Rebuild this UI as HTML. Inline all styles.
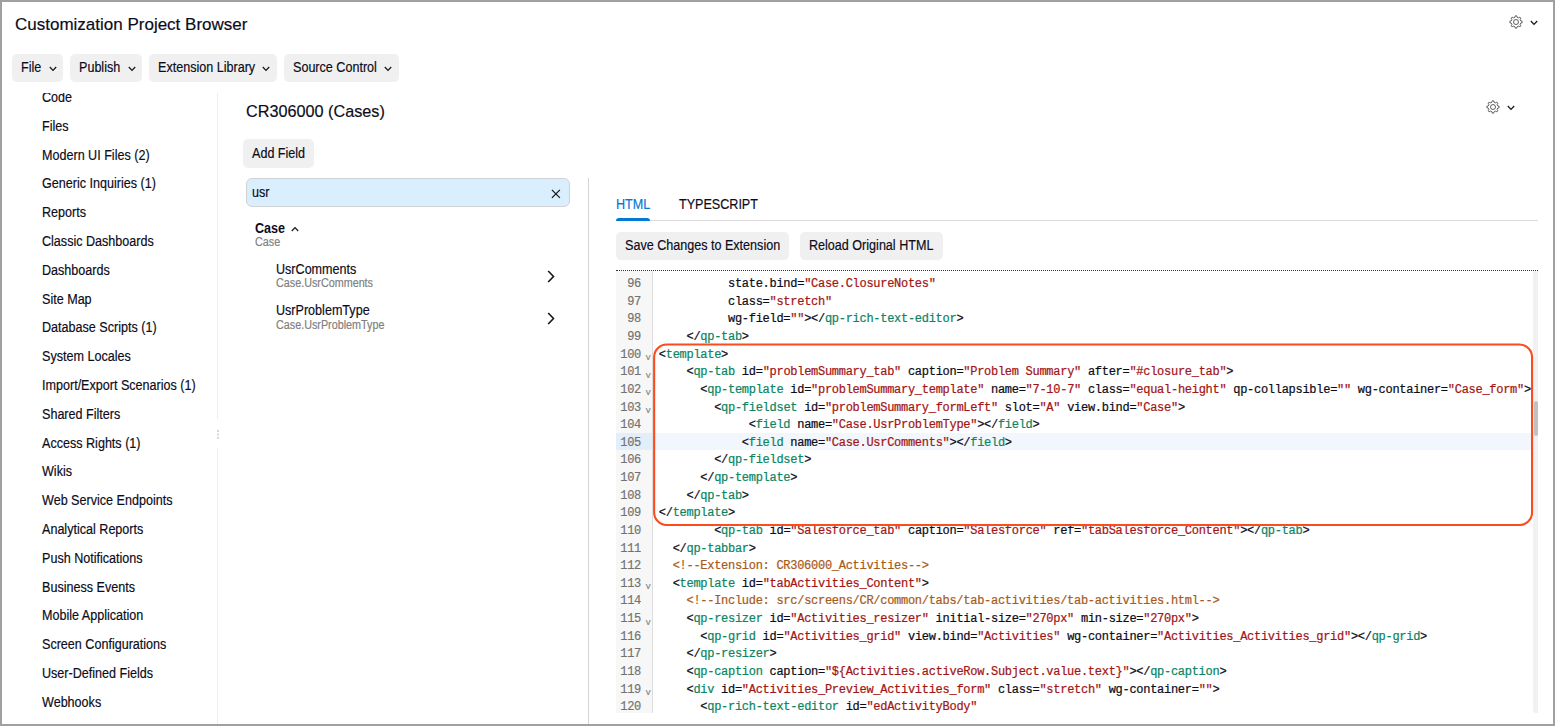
<!DOCTYPE html>
<html lang="en">
<head>
<meta charset="utf-8">
<title>Customization Project Browser</title>
<style>
*{box-sizing:border-box;margin:0;padding:0}
html,body{width:1555px;height:726px;overflow:hidden;background:#fff}
body{font-family:"Liberation Sans",Arial,sans-serif;color:#0c0c1a;-webkit-text-stroke:.18px;position:relative;font-size:14px}
.abs{position:absolute}
.frame{position:absolute;left:0;top:0;width:1555px;height:726px;border:solid #a0a0a0;border-width:2px;z-index:50;pointer-events:none}
.n{display:inline-block;transform:scaleX(.898);transform-origin:0 50%;white-space:nowrap}
.title{left:15px;top:14px;font-size:17px;line-height:22px;white-space:nowrap}
.btn{position:absolute;top:54px;height:28px;background:#f0f0f0;border-radius:5px;font-size:14px;line-height:27px;padding-left:9px;white-space:nowrap}
.btn svg{position:absolute;top:12px}
.side{left:0;top:93px;width:217px;height:633px;overflow:hidden}
.si{position:absolute;left:42px;height:16px;line-height:16px;font-size:14px;white-space:nowrap}
.vline{background:#efefef;width:1px}
.h2{left:246px;top:101px;font-size:17px;line-height:22px;white-space:nowrap;transform:scaleX(.954);transform-origin:0 50%}
.search{left:246px;top:178px;width:324px;height:29px;background:#d9effd;border:1px solid #d0d3d6;border-radius:6px;font-size:14px;line-height:27px;padding-left:5px}
.b{font-weight:bold;-webkit-text-stroke:0}
.sub{color:#808080;font-size:12px}
.tab{font-size:14px;line-height:16px;white-space:nowrap}
.code{font-family:"Liberation Mono","DejaVu Sans Mono",monospace;font-size:12px;letter-spacing:-0.281px;color:#0c0c1a}
.cl,.gl{white-space:pre}
.cl{-webkit-text-stroke:.22px}
.cl{height:17.625px;line-height:17.625px;padding-left:5.8px}
.t{color:#0b8563}.s{color:#a31515}.c{color:#a85a1a}
.gutter{left:616px;top:271px;width:37px;height:442px;overflow:hidden;background:#f7f7f7;border-right:1px solid #ddd}
.gl{height:17.625px;line-height:17.625px;position:relative;color:#727272}
.ln{position:absolute;right:11px;top:0}
.fd{position:absolute;left:29.5px;top:3.5px;font-size:9px;letter-spacing:0;color:#888}
</style>
</head>
<body>
<div class="abs title">Customization Project Browser</div>

<div class="btn" style="left:12px;width:51px"><span class="n">File</span><svg style="left:36.5px" width="8" height="6" viewBox="0 0 8 6"><path d="M.8 1l3.2 3.4L7.2 1" fill="none" stroke="#15151f" stroke-width="1.25"/></svg></div>
<div class="btn" style="left:70px;width:72px"><span class="n">Publish</span><svg style="left:57.5px" width="8" height="6" viewBox="0 0 8 6"><path d="M.8 1l3.2 3.4L7.2 1" fill="none" stroke="#15151f" stroke-width="1.25"/></svg></div>
<div class="btn" style="left:149px;width:127.5px"><span class="n">Extension Library</span><svg style="left:112.5px" width="8" height="6" viewBox="0 0 8 6"><path d="M.8 1l3.2 3.4L7.2 1" fill="none" stroke="#15151f" stroke-width="1.25"/></svg></div>
<div class="btn" style="left:284px;width:114.5px"><span class="n">Source Control</span><svg style="left:100px" width="8" height="6" viewBox="0 0 8 6"><path d="M.8 1l3.2 3.4L7.2 1" fill="none" stroke="#15151f" stroke-width="1.25"/></svg></div>

<!-- top-right gear -->
<svg class="abs" style="left:1508.4px;top:14.4px" width="16" height="16" viewBox="-8 -8 16 16"><g fill="none" stroke="#444" stroke-width=".85" stroke-linejoin="round"><circle r="2.5"/><path d="M-1.03 -4.79 L-0.73 -6.16 L0.73 -6.16 L1.03 -4.79 L2.66 -4.12 L3.84 -4.87 L4.87 -3.84 L4.12 -2.66 L4.79 -1.03 L6.16 -0.73 L6.16 0.73 L4.79 1.03 L4.12 2.66 L4.87 3.84 L3.84 4.87 L2.66 4.12 L1.03 4.79 L0.73 6.16 L-0.73 6.16 L-1.03 4.79 L-2.66 4.12 L-3.84 4.87 L-4.87 3.84 L-4.12 2.66 L-4.79 1.03 L-6.16 0.73 L-6.16 -0.73 L-4.79 -1.03 L-4.12 -2.66 L-4.87 -3.84 L-3.84 -4.87 L-2.66 -4.12Z"/></g></svg>
<svg class="abs" style="left:1530px;top:20px" width="8" height="6" viewBox="0 0 8 6"><path d="M.8 1l3.2 3.4L7.2 1" fill="none" stroke="#15151f" stroke-width="1.25"/></svg>

<!-- sidebar -->
<div class="abs side">
<div class="si" style="top:-4px"><span class="n">Code</span></div>
<div class="si" style="top:25px"><span class="n">Files</span></div>
<div class="si" style="top:54px"><span class="n">Modern UI Files (2)</span></div>
<div class="si" style="top:82px"><span class="n">Generic Inquiries (1)</span></div>
<div class="si" style="top:111px"><span class="n">Reports</span></div>
<div class="si" style="top:140px"><span class="n">Classic Dashboards</span></div>
<div class="si" style="top:169px"><span class="n">Dashboards</span></div>
<div class="si" style="top:198px"><span class="n">Site Map</span></div>
<div class="si" style="top:226px"><span class="n">Database Scripts (1)</span></div>
<div class="si" style="top:255px"><span class="n">System Locales</span></div>
<div class="si" style="top:284px"><span class="n">Import/Export Scenarios (1)</span></div>
<div class="si" style="top:313px"><span class="n">Shared Filters</span></div>
<div class="si" style="top:342px"><span class="n">Access Rights (1)</span></div>
<div class="si" style="top:370px"><span class="n">Wikis</span></div>
<div class="si" style="top:399px"><span class="n">Web Service Endpoints</span></div>
<div class="si" style="top:428px"><span class="n">Analytical Reports</span></div>
<div class="si" style="top:457px"><span class="n">Push Notifications</span></div>
<div class="si" style="top:486px"><span class="n">Business Events</span></div>
<div class="si" style="top:514px"><span class="n">Mobile Application</span></div>
<div class="si" style="top:543px"><span class="n">Screen Configurations</span></div>
<div class="si" style="top:572px"><span class="n">User-Defined Fields</span></div>
<div class="si" style="top:601px"><span class="n">Webhooks</span></div>
</div>
<div class="abs vline" style="left:217px;top:93px;height:633px"></div>
<div class="abs" style="left:216px;top:419px;width:4px;height:29px;background:#fff"></div>
<div class="abs" style="left:217px;top:430px;width:2px;height:2px;background:#d8d8d8;box-shadow:0 3.5px 0 #d8d8d8,0 7px 0 #d8d8d8"></div>

<!-- middle panel -->
<div class="abs h2">CR306000 (Cases)</div>
<svg class="abs" style="left:1485.2px;top:99.4px" width="16" height="16" viewBox="-8 -8 16 16"><g fill="none" stroke="#444" stroke-width=".85" stroke-linejoin="round"><circle r="2.5"/><path d="M-1.03 -4.79 L-0.73 -6.16 L0.73 -6.16 L1.03 -4.79 L2.66 -4.12 L3.84 -4.87 L4.87 -3.84 L4.12 -2.66 L4.79 -1.03 L6.16 -0.73 L6.16 0.73 L4.79 1.03 L4.12 2.66 L4.87 3.84 L3.84 4.87 L2.66 4.12 L1.03 4.79 L0.73 6.16 L-0.73 6.16 L-1.03 4.79 L-2.66 4.12 L-3.84 4.87 L-4.87 3.84 L-4.12 2.66 L-4.79 1.03 L-6.16 0.73 L-6.16 -0.73 L-4.79 -1.03 L-4.12 -2.66 L-4.87 -3.84 L-3.84 -4.87 L-2.66 -4.12Z"/></g></svg>
<svg class="abs" style="left:1507px;top:105px" width="8" height="6" viewBox="0 0 8 6"><path d="M.8 1l3.2 3.4L7.2 1" fill="none" stroke="#15151f" stroke-width="1.25"/></svg>

<div class="btn" style="left:243px;top:139px;width:70.5px;height:29px;line-height:28px;padding-left:9px"><span class="n">Add Field</span></div>
<div class="abs search"><span class="n">usr</span></div>
<svg class="abs" style="left:551px;top:188.5px" width="10" height="10" viewBox="0 0 10 10"><path d="M.9.9l8 8M8.9.9l-8 8" stroke="#15151f" stroke-width="1.25" fill="none"/></svg>

<div class="abs b" style="left:255px;top:220px;font-size:14px;line-height:16px"><span class="n">Case</span></div>
<svg class="abs" style="left:291px;top:226px" width="8" height="6" viewBox="0 0 8 6"><path d="M.8 5l3.2-3.4L7.2 5" fill="none" stroke="#15151f" stroke-width="1.25"/></svg>
<div class="abs sub" style="left:255px;top:235px;line-height:14px"><span class="n">Case</span></div>

<div class="abs" style="left:276px;top:261px;font-size:14px;line-height:16px"><span class="n">UsrComments</span></div>
<div class="abs sub" style="left:276px;top:276px;line-height:14px"><span class="n">Case.UsrComments</span></div>
<svg class="abs" style="left:547px;top:270px" width="8" height="13" viewBox="0 0 8 13"><path d="M1.2 1l5.3 5.5L1.2 12" fill="none" stroke="#15151f" stroke-width="1.6"/></svg>

<div class="abs" style="left:276px;top:302px;font-size:14px;line-height:16px"><span class="n">UsrProblemType</span></div>
<div class="abs sub" style="left:276px;top:318px;line-height:14px"><span class="n">Case.UsrProblemType</span></div>
<svg class="abs" style="left:547px;top:312px" width="8" height="13" viewBox="0 0 8 13"><path d="M1.2 1l5.3 5.5L1.2 12" fill="none" stroke="#15151f" stroke-width="1.6"/></svg>

<div class="abs vline" style="left:588px;top:178px;height:548px;background:#d4d4d4"></div>

<!-- right panel -->
<div class="abs tab" style="left:615.5px;top:196px;color:#0278d7"><span class="n">HTML</span></div>
<div class="abs tab" style="left:679px;top:196px"><span class="n">TYPESCRIPT</span></div>
<div class="abs" style="left:616px;top:220px;width:922px;height:1px;background:#dcdcdc"></div>
<div class="abs" style="left:616px;top:218px;width:34px;height:3px;background:#0278d7;border-radius:3px 3px 0 0"></div>

<div class="btn" style="left:616px;top:232px;width:173px"><span class="n">Save Changes to Extension</span></div>
<div class="btn" style="left:800px;top:232px;width:143px"><span class="n">Reload Original HTML</span></div>

<!-- editor -->
<div class="abs" style="left:616px;top:270px;width:922px;height:0;border-top:1px dotted #333"></div>
<div class="abs gutter code"><div style="position:absolute;left:0;top:162px;width:36px;height:17px;background:#e2eefa"></div><div style="position:absolute;left:0;top:5.2px;width:36px">
<div class="gl"><span class="ln">96</span></div>
<div class="gl"><span class="ln">97</span></div>
<div class="gl"><span class="ln">98</span></div>
<div class="gl"><span class="ln">99</span></div>
<div class="gl"><span class="ln">100</span><span class="fd">v</span></div>
<div class="gl"><span class="ln">101</span><span class="fd">v</span></div>
<div class="gl"><span class="ln">102</span><span class="fd">v</span></div>
<div class="gl"><span class="ln">103</span><span class="fd">v</span></div>
<div class="gl"><span class="ln">104</span></div>
<div class="gl cur"><span class="ln">105</span></div>
<div class="gl"><span class="ln">106</span></div>
<div class="gl"><span class="ln">107</span></div>
<div class="gl"><span class="ln">108</span></div>
<div class="gl"><span class="ln">109</span></div>
<div class="gl"><span class="ln">110</span></div>
<div class="gl"><span class="ln">111</span></div>
<div class="gl"><span class="ln">112</span></div>
<div class="gl"><span class="ln">113</span><span class="fd">v</span></div>
<div class="gl"><span class="ln">114</span></div>
<div class="gl"><span class="ln">115</span><span class="fd">v</span></div>
<div class="gl"><span class="ln">116</span></div>
<div class="gl"><span class="ln">117</span></div>
<div class="gl"><span class="ln">118</span></div>
<div class="gl"><span class="ln">119</span><span class="fd">v</span></div>
<div class="gl"><span class="ln">120</span></div>
</div></div>
<div class="abs code" style="left:653px;top:271px;width:881px;height:442px;overflow:hidden">
<div style="position:absolute;left:0;top:162px;width:881px;height:17px;background:#f1f7fd"></div>
<div style="position:absolute;left:0;top:5.2px;width:881px">
<div class="cl">          state.bind=<span class="s">&quot;Case.ClosureNotes&quot;</span></div>
<div class="cl">          class=<span class="s">&quot;stretch&quot;</span></div>
<div class="cl">          wg-field=<span class="s">&quot;&quot;</span>&gt;&lt;/<span class="t">qp-rich-text-editor</span>&gt;</div>
<div class="cl">    &lt;/<span class="t">qp-tab</span>&gt;</div>
<div class="cl">&lt;<span class="t">template</span>&gt;</div>
<div class="cl">    &lt;<span class="t">qp-tab</span> id=<span class="s">&quot;problemSummary_tab&quot;</span> caption=<span class="s">&quot;Problem Summary&quot;</span> after=<span class="s">&quot;#closure_tab&quot;</span>&gt;</div>
<div class="cl">      &lt;<span class="t">qp-template</span> id=<span class="s">&quot;problemSummary_template&quot;</span> name=<span class="s">&quot;7-10-7&quot;</span> class=<span class="s">&quot;equal-height&quot;</span> qp-collapsible=<span class="s">&quot;&quot;</span> wg-container=<span class="s">&quot;Case_form&quot;</span>&gt;</div>
<div class="cl">        &lt;<span class="t">qp-fieldset</span> id=<span class="s">&quot;problemSummary_formLeft&quot;</span> slot=<span class="s">&quot;A&quot;</span> view.bind=<span class="s">&quot;Case&quot;</span>&gt;</div>
<div class="cl">             &lt;<span class="t">field</span> name=<span class="s">&quot;Case.UsrProblemType&quot;</span>&gt;&lt;/<span class="t">field</span>&gt;</div>
<div class="cl cur">            &lt;<span class="t">field</span> name=<span class="s">&quot;Case.UsrComments&quot;</span>&gt;&lt;/<span class="t">field</span>&gt;</div>
<div class="cl">        &lt;/<span class="t">qp-fieldset</span>&gt;</div>
<div class="cl">      &lt;/<span class="t">qp-template</span>&gt;</div>
<div class="cl">    &lt;/<span class="t">qp-tab</span>&gt;</div>
<div class="cl">&lt;/<span class="t">template</span>&gt;</div>
<div class="cl">        &lt;<span class="t">qp-tab</span> id=<span class="s">&quot;Salesforce_tab&quot;</span> caption=<span class="s">&quot;Salesforce&quot;</span> ref=<span class="s">&quot;tabSalesforce_Content&quot;</span>&gt;&lt;/<span class="t">qp-tab</span>&gt;</div>
<div class="cl">  &lt;/<span class="t">qp-tabbar</span>&gt;</div>
<div class="cl">  <span class="c">&lt;!--Extension: CR306000_Activities--&gt;</span></div>
<div class="cl">  &lt;<span class="t">template</span> id=<span class="s">&quot;tabActivities_Content&quot;</span>&gt;</div>
<div class="cl">    <span class="c">&lt;!--Include: src/screens/CR/common/tabs/tab-activities/tab-activities.html--&gt;</span></div>
<div class="cl">    &lt;<span class="t">qp-resizer</span> id=<span class="s">&quot;Activities_resizer&quot;</span> initial-size=<span class="s">&quot;270px&quot;</span> min-size=<span class="s">&quot;270px&quot;</span>&gt;</div>
<div class="cl">      &lt;<span class="t">qp-grid</span> id=<span class="s">&quot;Activities_grid&quot;</span> view.bind=<span class="s">&quot;Activities&quot;</span> wg-container=<span class="s">&quot;Activities_Activities_grid&quot;</span>&gt;&lt;/<span class="t">qp-grid</span>&gt;</div>
<div class="cl">    &lt;/<span class="t">qp-resizer</span>&gt;</div>
<div class="cl">    &lt;<span class="t">qp-caption</span> caption=<span class="s">&quot;${Activities.activeRow.Subject.value.text}&quot;</span>&gt;&lt;/<span class="t">qp-caption</span>&gt;</div>
<div class="cl">    &lt;<span class="t">div</span> id=<span class="s">&quot;Activities_Preview_Activities_form&quot;</span> class=<span class="s">&quot;stretch&quot;</span> wg-container=<span class="s">&quot;&quot;</span>&gt;</div>
<div class="cl">      &lt;<span class="t">qp-rich-text-editor</span> id=<span class="s">&quot;edActivityBody&quot;</span></div>
</div>
</div>
<!-- scrollbar -->
<div class="abs" style="left:1533px;top:271px;width:5px;height:442px;background:#f1f1f1;border-radius:0 0 0 3px"></div>
<div class="abs" style="left:1534px;top:401px;width:4px;height:35px;background:#c1c1c1;border-radius:2px"></div>
<!-- highlight box -->
<svg class="abs" style="left:640px;top:330px" width="910" height="210" viewBox="640 330 910 210"><rect x="654.15" y="344.55" width="877.9" height="180.4" rx="12.5" ry="12.5" fill="none" stroke="#fb4b1f" stroke-width="2.1"/></svg>

<div class="frame"></div>
</body>
</html>
